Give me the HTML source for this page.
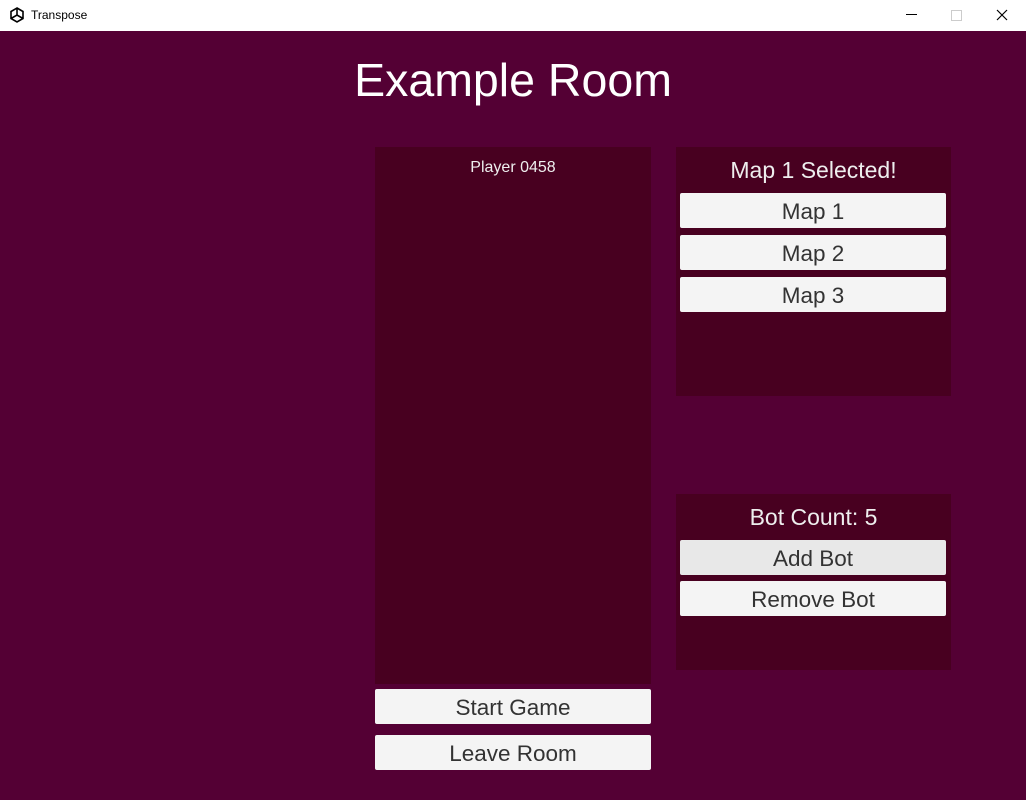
<!DOCTYPE html>
<html><head><style>
body{margin:0;width:1026px;height:800px;overflow:hidden;background:#540034;font-family:"Liberation Sans",sans-serif;position:relative}
.tb{position:absolute;left:0;top:0;width:1026px;height:31px;background:#fff;}
.a{position:absolute}
.p{position:absolute;background:#480020}
.b{position:absolute;background:#f4f4f4;color:#333;font-size:22.5px;text-align:center;line-height:38px;border-radius:2px}
</style></head><body>
<div class="tb">
<svg class="a" style="left:9px;top:7px" width="16" height="16" viewBox="0 0 16 16"><path d="M8 1 L14 4.5 L14 11.5 L8 15 L2 11.5 L2 4.5 Z M8 1 L8 8 M2 11.5 L8 8 L14 11.5" fill="none" stroke="#000" stroke-width="1.6"/></svg>
<div class="a" style="left:31px;top:8px;font-size:12px;color:#000">Transpose</div>
<div class="a" style="left:906px;top:14px;width:11px;height:1px;background:#000"></div>
<div class="a" style="left:951px;top:10px;width:9px;height:9px;border:1px solid #ccc"></div>
<svg class="a" style="left:996px;top:9px" width="12" height="12"><path d="M1 1L11 11M11 1L1 11" stroke="#000" stroke-width="1.2"/></svg>
</div>
<div class="a" style="left:0;top:48px;width:1026px;text-align:center;color:#fff;font-size:46.5px;line-height:64px">Example Room</div>
<div class="p" style="left:375px;top:147px;width:276px;height:537px"></div>
<div class="a" style="left:375px;top:159px;width:276px;text-align:center;color:#eee;font-size:16px">Player 0458</div>
<div class="b" style="left:375px;top:689px;width:276px;height:35px">Start Game</div>
<div class="b" style="left:375px;top:735px;width:276px;height:35px">Leave Room</div>
<div class="p" style="left:676px;top:147px;width:275px;height:249px"></div>
<div class="a" style="left:676px;top:157px;width:275px;text-align:center;color:#eee;font-size:23px">Map 1 Selected!</div>
<div class="b" style="left:680px;top:193px;width:266px;height:35px">Map 1</div>
<div class="b" style="left:680px;top:235px;width:266px;height:35px">Map 2</div>
<div class="b" style="left:680px;top:277px;width:266px;height:35px">Map 3</div>
<div class="p" style="left:676px;top:494px;width:275px;height:176px"></div>
<div class="a" style="left:676px;top:504px;width:275px;text-align:center;color:#eee;font-size:23px">Bot Count: 5</div>
<div class="b" style="left:680px;top:540px;width:266px;height:35px;background:#e8e8e8">Add Bot</div>
<div class="b" style="left:680px;top:581px;width:266px;height:35px">Remove Bot</div>
</body></html>
